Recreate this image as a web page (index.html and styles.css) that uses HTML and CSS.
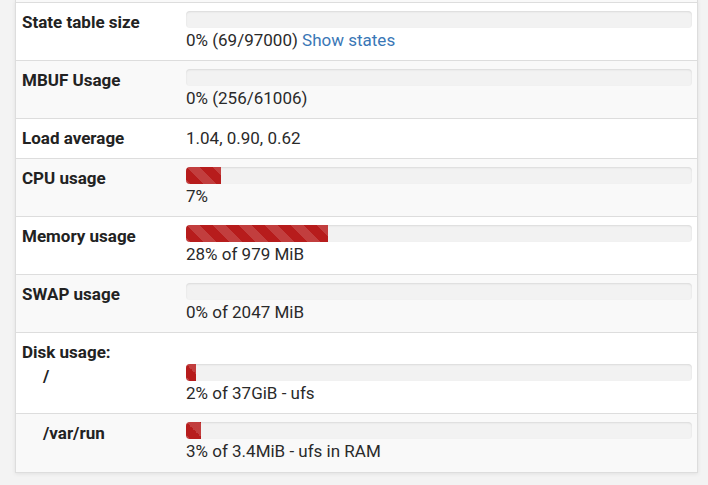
FILE: index.html
```html
<!DOCTYPE html>
<html>
<head>
<meta charset="utf-8">
<link rel="stylesheet" href="styles.css">
</head>
<body>
<div class="panel">
  <div class="row row-cut"></div>
  <div class="row">
    <div class="label">State table size</div>
    <div class="value">
      <div class="progress"></div>
      <div class="text">0% (69/97000) <a href="#">Show states</a></div>
    </div>
  </div>
  <div class="row striped">
    <div class="label">MBUF Usage</div>
    <div class="value">
      <div class="progress"></div>
      <div class="text">0% (256/61006)</div>
    </div>
  </div>
  <div class="row">
    <div class="label">Load average</div>
    <div class="value"><div class="text">1.04, 0.90, 0.62</div></div>
  </div>
  <div class="row striped">
    <div class="label">CPU usage</div>
    <div class="value">
      <div class="progress"><div class="bar" style="width:7%"></div></div>
      <div class="text">7%</div>
    </div>
  </div>
  <div class="row">
    <div class="label">Memory usage</div>
    <div class="value">
      <div class="progress"><div class="bar" style="width:28%"></div></div>
      <div class="text">28% of 979 MiB</div>
    </div>
  </div>
  <div class="row striped">
    <div class="label">SWAP usage</div>
    <div class="value">
      <div class="progress"></div>
      <div class="text">0% of 2047 MiB</div>
    </div>
  </div>
  <div class="row">
    <div class="label">
      <div>Disk usage:</div>
      <div class="sub sub-first">/</div>
    </div>
    <div class="value">
      <div class="spacer"></div>
      <div class="progress"><div class="bar" style="width:2%"></div></div>
      <div class="text">2% of 37GiB - ufs</div>
    </div>
  </div>
  <div class="row striped">
    <div class="label"><div class="sub">/var/run</div></div>
    <div class="value">
      <div class="progress"><div class="bar" style="width:3%"></div></div>
      <div class="text">3% of 3.4MiB - ufs in RAM</div>
    </div>
  </div>
</div>
</body>
</html>
```

FILE: styles.css
```css
html, body {
  margin: 0;
  padding: 0;
}
body {
  background: #f3f3f3;
  font-family: Roboto, "Liberation Sans", sans-serif;
  font-size: 17px;
  line-height: 22.2px;
  color: #2a2a2a;
  height: 485px;
  overflow: hidden;
}
.panel {
  margin-left: 15px;
  width: 681px;
  background: #fff;
  border: 1px solid #ddd;
  border-top: none;
  box-shadow: 0 1px 4px rgba(0, 0, 0, 0.08);
}
.row {
  display: grid;
  grid-template-columns: 164px 1fr;
  padding: 8px 5px 8px 6px;
  border-top: 1px solid #ddd;
  background: #fff;
}
.row.striped {
  background: #f9f9f9;
}
.row-cut {
  display: block;
  padding: 0;
  height: 2px;
  border-top: none;
  background: #f9f9f9;
}
.label {
  font-weight: bold;
  color: #222;
}
.label .sub {
  padding-left: 21px;
}
.label .sub-first {
  margin-top: 2px;
}
.spacer {
  height: 23px;
}
.progress {
  height: 17px;
  margin-bottom: 1px;
  background: #f2f2f2;
  border-radius: 4px;
  box-shadow: inset 0 1px 2px rgba(0, 0, 0, 0.1);
  overflow: hidden;
}
.text {
  padding-bottom: 1px;
}
.value > .text:only-child {
  padding-bottom: 0;
}
.bar {
  height: 100%;
  background-color: #b71c1c;
  background-image: linear-gradient(45deg, rgba(255,255,255,.15) 25%, transparent 25%, transparent 50%, rgba(255,255,255,.15) 50%, rgba(255,255,255,.15) 75%, transparent 75%, transparent);
  background-size: 26px 26px;
}
a {
  color: #3a77b6;
  text-decoration: none;
}
```
